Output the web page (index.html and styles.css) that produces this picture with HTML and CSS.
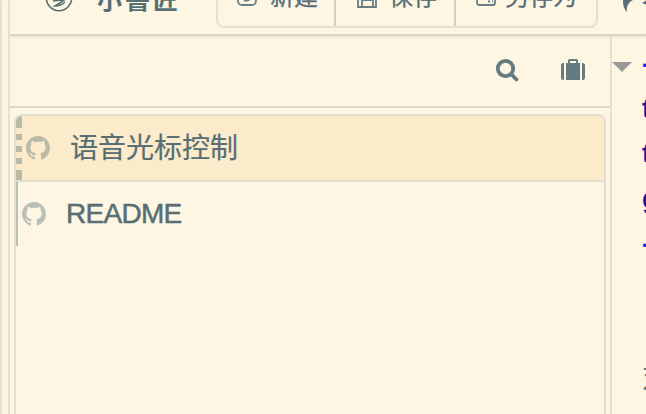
FILE: index.html
```html
<!DOCTYPE html>
<html lang="zh-CN">
<head>
<meta charset="utf-8">
<title>小書匠</title>
<link rel="stylesheet" href="styles.css">
</head>
<body>
<svg class="defs" aria-hidden="true">
  <symbol id="github" viewBox="0 0 16 16"><path d="M8 0C3.58 0 0 3.58 0 8c0 3.54 2.29 6.53 5.47 7.59.4.07.55-.17.55-.38 0-.19-.01-.82-.01-1.49-2.01.37-2.53-.49-2.69-.94-.09-.23-.48-.94-.82-1.13-.28-.15-.68-.52-.01-.53.63-.01 1.08.58 1.23.82.72 1.21 1.87.87 2.33.66.07-.52.28-.87.51-1.07-1.78-.2-3.64-.89-3.64-3.95 0-.87.31-1.59.82-2.15-.08-.2-.36-1.02.08-2.12 0 0 .67-.21 2.2.82.64-.18 1.32-.27 2-.27s1.36.09 2 .27c1.53-1.04 2.2-.82 2.2-.82.44 1.1.16 1.92.08 2.12.51.56.82 1.27.82 2.15 0 3.07-1.87 3.75-3.65 3.95.29.25.54.73.54 1.48 0 1.07-.01 1.93-.01 2.2 0 .21.15.46.55.38A8.01 8.01 0 0 0 16 8c0-4.42-3.58-8-8-8z"/></symbol>
</svg>
<div class="window">
  <div class="rail"></div>
  <div class="app">
    <header class="toolbar">
      <svg class="logo" viewBox="0 0 28 28"><circle cx="14" cy="14" r="12.7"/><path d="M8 17q6-1 11-1-4 3-9 6 6 0 10-4"/></svg>
      <span class="brand"><span>小</span><span>書</span><span>匠</span></span>
      <div class="group">
        <button class="btn new"><svg viewBox="0 0 20 20"><rect x="1" y="1" width="18" height="18" rx="4"/><path d="M7 14.500h3c2 0 3-2 3-4M10 10v4"/></svg><span>新建</span></button>
        <button class="btn save"><svg viewBox="0 0 20 20"><path d="M1 1h18v18H1zM5 19v-7h11v7M4 1v6h11V1"/></svg><span>保存</span></button>
        <button class="btn saveas"><svg viewBox="0 0 20 20"><rect x="1" y="1" width="18" height="18" rx="2"/><path d="M12 12h2m2 0h2M12 15.500h2m2 0h1"/></svg><span>另存为</span></button>
      </div>
      <svg class="undo" viewBox="0 0 24 12"><path d="M4 12C0 8 0 3 0 0h10C6 2 3 6 4 12zM19 3l5-3v5z"/></svg>
    </header>
    <div class="body">
      <section class="files">
        <div class="actions">
          <svg class="search" viewBox="0 0 24 24"><circle cx="10.500" cy="10.500" r="7.700"/><path d="M16.500 16.500l5 5"/></svg>
          <svg class="case" viewBox="0 0 24 22"><path d="M3 4v17H2.500Q0 21 0 18.500V6.500Q0 4 2.500 4zM5 4h2V1.500Q7 0 8.500 0h7Q17 0 17 1.500V4h2v17H5zM9 2v2h6V2zM21 4h.5Q24 4 24 6.500v12Q24 21 21.500 21H21z"/></svg>
        </div>
        <ul class="list">
          <li class="row active"><svg><use href="#github"/></svg><span class="name">语音光标控制</span></li>
          <li class="row"><svg><use href="#github"/></svg><span class="name">README</span></li>
        </ul>
      </section>
      <section class="editor">
        <svg class="fold" viewBox="0 0 20 10"><path d="M0 0h20L10 10z"/></svg>
        <div class="code">
          <div class="rule">---</div>
          <div>title</div>
          <div>tags</div>
          <div>grammar</div>
          <div class="rule">---</div>
          <div></div>
          <div></div>
          <div class="prose">对</div>
        </div>
      </section>
    </div>
  </div>
</div>
</body>
</html>
```
FILE: styles.css
```css
* { box-sizing: border-box; }
body {
  margin: 0;
  overflow: hidden;
  background: #fdf6e3;
  color: #586e75;
  font-family: "Liberation Sans", "Noto Sans CJK SC", sans-serif;
}
.defs { position: absolute; width: 0; height: 0; }
svg { display: block; flex: none; }
.window { display: flex; width: 646px; height: 414px; overflow: hidden; border-left: 2px solid #e6e0d0; }
.rail { width: 8px; flex: none; border-right: 2px solid #e6e0d0; }
.app { flex: 1; min-width: 0; display: flex; flex-direction: column; }
.toolbar {
  height: 36px;
  flex: none;
  display: flex;
  align-items: flex-end;
  overflow: hidden;
  border-bottom: 2px solid #d6d6c8;
  box-shadow: 0 1px 3px #e6e0d0;
}
.logo { width: 28px; height: 28px; margin: 0 0 22px 35px; fill: none; stroke: #586e75; stroke-width: 1.6; }
.brand {
  display: flex;
  flex: none;
  gap: 3px;
  width: 84px;
  margin: 0 0 22px 24px;
  font: bold 25px/28px "Noto Sans CJK TC", sans-serif;
}
.group {
  display: flex;
  width: 382px;
  height: 60px;
  flex: none;
  margin: 0 0 6px 35px;
  border: 2px solid #e6e0d0;
  border-radius: 8px;
}
.btn {
  display: flex;
  align-items: flex-end;
  gap: 13px;
  padding: 0 0 17px 19px;
  border: 0;
  border-right: 2px solid #d0d0c3;
  background: none;
  color: inherit;
  font: 24px/28px "Noto Sans CJK SC", sans-serif;
  -webkit-text-stroke: 0.3px #586e75;
  white-space: nowrap;
}
.btn svg { width: 20px; height: 20px; margin-bottom: 3px; fill: none; stroke: #6b7f83; stroke-width: 1.8; }
.new { width: 118px; }
.save { width: 120px; padding-left: 21px; gap: 12px; }
.save svg { margin-bottom: 1px; }
.saveas { width: 140px; padding-left: 20px; gap: 9px; border-right: 0; }
.undo { width: 24px; height: 12px; margin: 0 0 22px 25px; fill: #586e75; }
.body { flex: 1; display: flex; min-height: 0; }
.files { width: 602px; flex: none; display: flex; flex-direction: column; border-right: 2px solid #e6e0d0; }
.actions {
  display: flex;
  justify-content: flex-end;
  gap: 42px;
  height: 72px;
  flex: none;
  padding: 23px 25px 0 0;
  border-bottom: 2px solid #ddd7c6;
}
.search { width: 24px; height: 24px; margin-top: -1px; fill: none; stroke: #657b7f; stroke-width: 3.8; stroke-linecap: round; }
.case { width: 24px; height: 22px; fill: #657b7f; fill-rule: evenodd; }
.list {
  flex: 1;
  margin: 6px 4px -12px;
  padding: 0;
  list-style: none;
  overflow: hidden;
  border: 2px solid #e2dfd1;
  border-radius: 8px;
}
.row {
  display: flex;
  align-items: center;
  height: 64px;
  padding-left: 4px;
  border-left: 2px solid #b9c0b5;
  font-size: 28px;
}
.row svg { width: 24px; height: 24px; margin-right: 20px; fill: #b9c0b5; }
.name { letter-spacing: -0.7px; -webkit-text-stroke: 0.5px #586e75; }
.active {
  height: 66px;
  padding-left: 10px;
  border-left: 0;
  border-bottom: 2px solid #e2dfd1;
  background: linear-gradient(#b9baa6 0 12px, transparent 12px 18px, #b9baa6 18px 24px, transparent 24px 30px, #b9baa6 30px 36px, transparent 36px 42px, #b9baa6 42px 48px, transparent 48px 54px, #b9baa6 54px) 0 0 / 6px 100% no-repeat #fbebca;
}
.active svg { fill: #b9baa6; }
.active .name { letter-spacing: 0; padding-bottom: 4px; -webkit-text-stroke-width: 0.2px; }
.editor { flex: 1; min-width: 0; display: flex; }
.fold { width: 20px; height: 10px; margin-top: 26px; fill: #999; }
.code {
  flex: none;
  margin: 5px 0 0 10px;
  font: bold 28px/45px "Liberation Sans", "Noto Sans CJK SC", sans-serif;
  color: #221199;
}
.code div { height: 45px; }
.code .rule { color: #2222ff; }
.code .prose { color: #586e75; font-weight: normal; }
```
